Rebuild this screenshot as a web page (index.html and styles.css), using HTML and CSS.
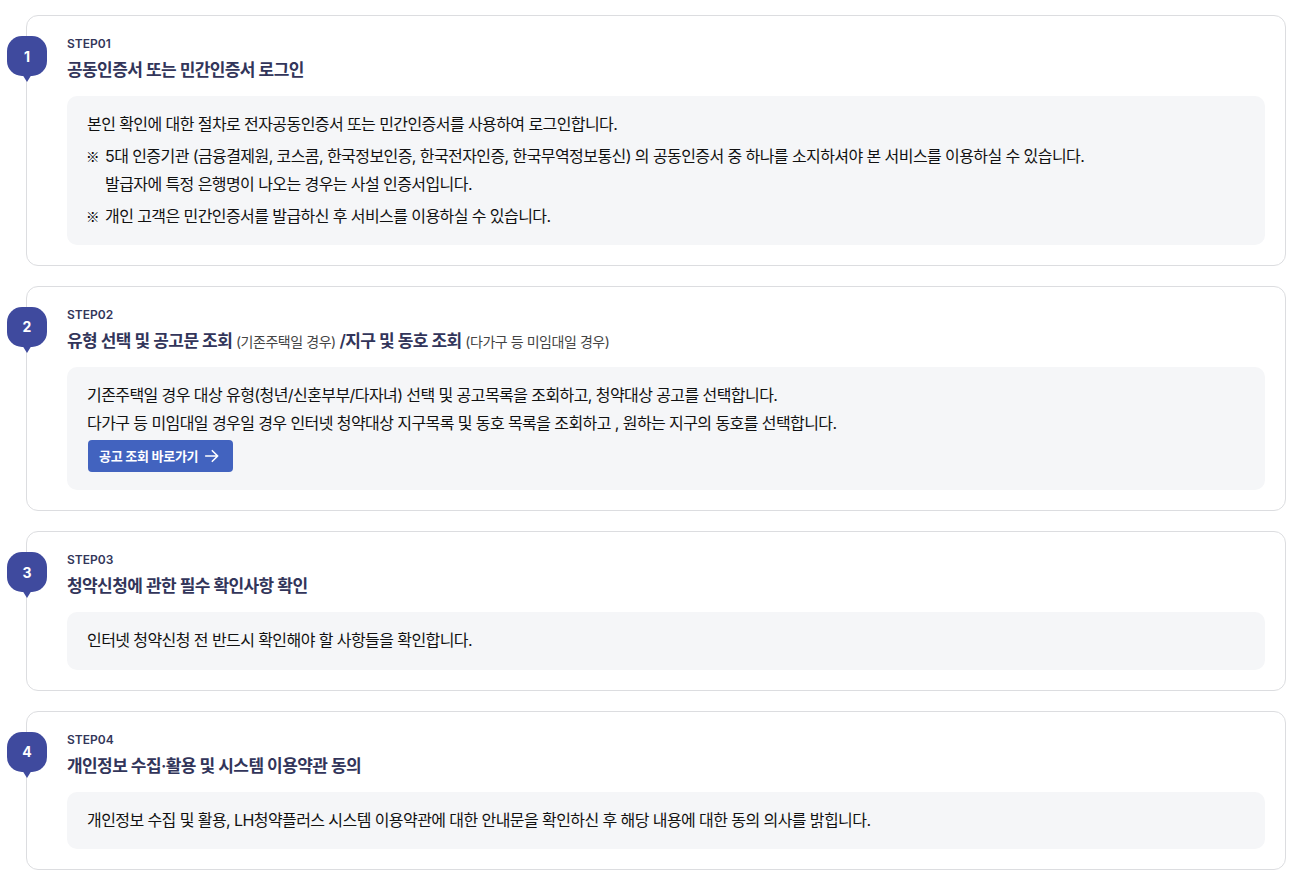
FILE: index.html
```html
<!DOCTYPE html>
<html lang="ko">
<head>
<meta charset="utf-8">
<title>청약 절차</title>
<link rel="stylesheet" href="styles.css">
</head>
<body>
<main class="steps">
  <section class="card">
    <div class="badge">1</div>
    <p class="step">STEP01</p>
    <h2 class="title">공동인증서 또는 민간인증서 로그인</h2>
    <div class="box">
      <p>본인 확인에 대한 절차로 전자공동인증서 또는 민간인증서를 사용하여 로그인합니다.</p>
      <ul class="notes">
        <li>5대 인증기관 (금융결제원, 코스콤, 한국정보인증, 한국전자인증, 한국무역정보통신) 의 공동인증서 중 하나를 소지하셔야 본 서비스를 이용하실 수 있습니다.<br>발급자에 특정 은행명이 나오는 경우는 사설 인증서입니다.</li>
        <li>개인 고객은 민간인증서를 발급하신 후 서비스를 이용하실 수 있습니다.</li>
      </ul>
    </div>
  </section>
  <section class="card">
    <div class="badge">2</div>
    <p class="step">STEP02</p>
    <h2 class="title">유형 선택 및 공고문 조회 <small>(기존주택일 경우)</small> /지구 및 동호 조회 <small>(다가구 등 미임대일 경우)</small></h2>
    <div class="box">
      <p>기존주택일 경우 대상 유형(청년/신혼부부/다자녀) 선택 및 공고목록을 조회하고, 청약대상 공고를 선택합니다.</p>
      <p>다가구 등 미임대일 경우일 경우 인터넷 청약대상 지구목록 및 동호 목록을 조회하고 , 원하는 지구의 동호를 선택합니다.</p>
      <a class="btn" href="#">공고 조회 바로가기
        <svg class="arrow" width="16" height="16" viewBox="0 0 16 16" fill="none" stroke="currentColor" stroke-width="1.6" stroke-linecap="round" stroke-linejoin="round"><path d="M2.7 8h12M9.3 2.7 14.7 8 9.3 13.3"/></svg>
      </a>
    </div>
  </section>
  <section class="card">
    <div class="badge">3</div>
    <p class="step">STEP03</p>
    <h2 class="title">청약신청에 관한 필수 확인사항 확인</h2>
    <div class="box">
      <p>인터넷 청약신청 전 반드시 확인해야 할 사항들을 확인합니다.</p>
    </div>
  </section>
  <section class="card">
    <div class="badge">4</div>
    <p class="step">STEP04</p>
    <h2 class="title">개인정보 수집·활용 및 시스템 이용약관 동의</h2>
    <div class="box">
      <p>개인정보 수집 및 활용, LH청약플러스 시스템 이용약관에 대한 안내문을 확인하신 후 해당 내용에 대한 동의 의사를 밝힙니다.</p>
    </div>
  </section>
</main>
</body>
</html>
```
FILE: styles.css
```css
* { box-sizing: border-box; }
html, body { margin: 0; background: #fff; }
body {
  font-family: Inter, "Noto Sans CJK KR", "Noto Sans", sans-serif;
  font-size: 16px;
  color: #111;
}
p, h2, ul { margin: 0; padding: 0; }
.steps {
  display: flex;
  flex-direction: column;
  gap: 20px;
  padding: 15.2px 8px 0 26px;
}
.card {
  position: relative;
  border: 1px solid #dcdde0;
  border-radius: 12px;
  padding: 20px 20px 20px 40px;
}
.badge {
  position: absolute;
  left: -20px;
  top: 20px;
  width: 40px;
  height: 40px;
  border-radius: 15px;
  background: #3f4a9e;
  color: #fff;
  font-size: 14px;
  font-weight: 700;
  display: flex;
  align-items: center;
  justify-content: center;
}
.badge::after {
  content: "";
  position: absolute;
  left: 15px;
  top: 38px;
  border-left: 5px solid transparent;
  border-right: 5px solid transparent;
  border-top: 8px solid #3f4a9e;
}
.step {
  font-size: 12px;
  font-weight: 600;
  line-height: 16px;
  color: #33365a;
}
.title {
  margin-top: 5px;
  height: 26px;
  font-size: 17px;
  font-weight: 600;
  line-height: 26px;
  color: #32355a;
  letter-spacing: -0.035em;
}
.title small {
  font-size: 14px;
  font-weight: 400;
  color: #444;
  letter-spacing: -0.45px;
}
.box {
  margin-top: 13px;
  min-height: 57.6px;
  padding: 14px 20px 14.8px;
  background: #f5f6f8;
  border-radius: 10px;
  line-height: 28px;
  letter-spacing: -0.58px;
}
.notes { list-style: none; }
.notes li {
  position: relative;
  margin-top: 4px;
  padding-left: 18px;
}
.notes li::before {
  content: "※";
  font-family: "Noto Sans CJK KR", sans-serif;
  font-size: 13.5px;
  font-weight: 500;
  color: #000;
  letter-spacing: 0;
  position: absolute;
  left: -1px;
}
.btn {
  display: flex;
  width: 145px;
  height: 32px;
  margin: 3px 0 3.4px 1px;
  padding-left: 11px;
  align-items: center;
  gap: 5px;
  background: #4263bf;
  border-radius: 4px;
  color: #fff;
  font-size: 13px;
  font-weight: 600;
  letter-spacing: -0.3px;
  text-decoration: none;
}
```
